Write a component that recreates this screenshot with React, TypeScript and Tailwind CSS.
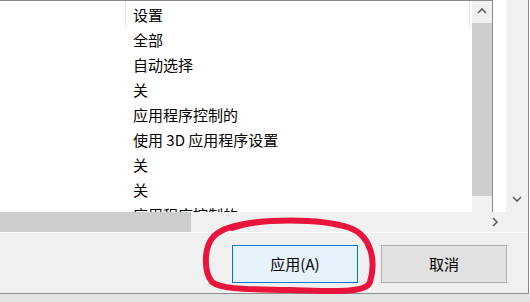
const rows = [
  "全部",
  "自动选择",
  "关",
  "应用程序控制的",
  "使用 3D 应用程序设置",
  "关",
  "关",
  "应用程序控制的",
];

function Chevron({ dir }: { dir: "up" | "down" | "right" }) {
  const pts =
    dir === "up"
      ? "1,6 5,2 9,6"
      : dir === "down"
        ? "1,2 5,6 9,2"
        : "2,1 6,5 2,9";
  return (
    <svg width="10" height="10" viewBox="0 0 10 10">
      <polyline
        points={pts}
        fill="none"
        stroke="#606060"
        strokeWidth="1.6"
      />
    </svg>
  );
}

export default function App() {
  return (
    <div
      className="relative w-[530px] h-[302px] overflow-hidden bg-white text-black"
      style={{ fontFamily: '"Noto Sans CJK SC", "Noto Sans", sans-serif' }}
    >
      <div className="flex h-[294px] w-[529px] flex-col border-r border-b border-[#8c8c8c]">
        {/* top part */}
        <div className="flex h-[232px]">
          <div className="flex w-[506px] flex-col">
            <div className="flex h-[212px]">
              {/* list box */}
              <div className="flex w-[493px] border-t border-r border-[#8c8c8c]">
                <div className="w-[472px] overflow-hidden text-[15px]">
                  <div className="flex h-[26px] pt-[1px]">
                    <div className="w-[126px] border-r border-[#e5e5e5]" />
                    <div className="w-[344px] border-r border-[#e5e5e5] pl-[7px] leading-[25px]">
                      设置
                    </div>
                  </div>
                  {rows.map((r, i) => (
                    <div key={i} className="h-[25px] pl-[133px] leading-[25px] whitespace-nowrap">
                      {r}
                    </div>
                  ))}
                </div>
                {/* vertical scrollbar of the list */}
                <div className="flex w-[20px] flex-col bg-[#f0f0f0]">
                  <div className="flex h-[22px] items-center justify-center">
                    <Chevron dir="up" />
                  </div>
                  <div className="h-[173px] bg-[#cdcdcd]" />
                </div>
              </div>
              <div className="w-[13px] bg-white" />
            </div>
            {/* horizontal scrollbar */}
            <div className="flex h-[20px] bg-[#f0f0f0]">
              <div className="w-[191px] bg-[#cdcdcd]" />
              <div className="flex-1" />
              <div className="flex w-[21px] items-center justify-center">
                <Chevron dir="right" />
              </div>
            </div>
          </div>
          {/* outer vertical scrollbar */}
          <div className="flex w-[22px] flex-col bg-[#f0f0f0]">
            <div className="h-[190px]" />
            <div className="flex h-[20px] items-center justify-center">
              <Chevron dir="down" />
            </div>
          </div>
        </div>
        {/* button panel */}
        <div className="flex flex-1 justify-end gap-[23px] border-t border-[#fbfbfb] bg-[#f0f0f0] pt-[12px] pr-[21px] text-[15px]">
          <button className="h-[38px] w-[126px] border border-[#0078d7] bg-[#e5f1fb]">
            应用(A)
          </button>
          <button className="h-[38px] w-[126px] border border-[#adadad] bg-[#e1e1e1]">
            取消
          </button>
        </div>
      </div>
      <div className="h-[8px] bg-[#e3e3e3]" />

      {/* red hand-drawn mark */}
      <svg className="pointer-events-none absolute inset-0" width="530" height="302">
        <path
          d="M232 228 C260 218 320 218 350 228 C372 236 376 262 370 282 C366 294 330 291 290 290 C250 289 222 290 212 282 C204 272 203 248 214 236 C224 226 250 222 272 221"
          fill="none"
          stroke="#e8143c"
          strokeWidth="6"
          strokeLinecap="round"
        />
      </svg>
    </div>
  );
}
